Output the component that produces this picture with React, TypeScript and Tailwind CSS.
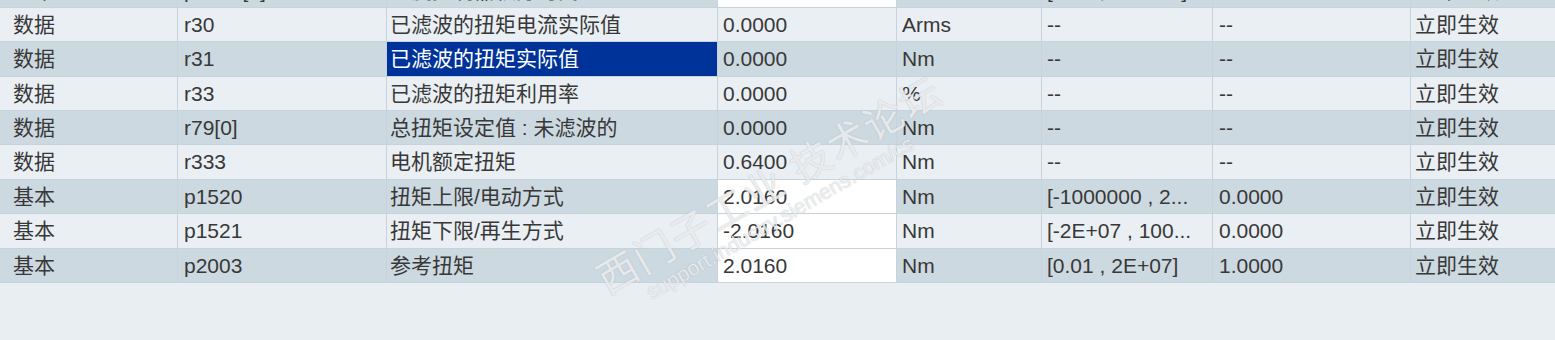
import React from 'react';

type Row = {
  group: string;
  no: string;
  name: string;
  value: string;
  unit: string;
  range: string;
  def: string;
  effect: string;
  editable?: boolean;
  selected?: boolean;
};

const rows: Row[] = [
  { group: '基本', no: 'p1400[0]', name: '速度控制器积分时间', value: '', unit: '', range: '[0.00 , 100000]', def: '', effect: '立即生效', editable: true },
  { group: '数据', no: 'r30', name: '已滤波的扭矩电流实际值', value: '0.0000', unit: 'Arms', range: '--', def: '--', effect: '立即生效' },
  { group: '数据', no: 'r31', name: '已滤波的扭矩实际值', value: '0.0000', unit: 'Nm', range: '--', def: '--', effect: '立即生效', selected: true },
  { group: '数据', no: 'r33', name: '已滤波的扭矩利用率', value: '0.0000', unit: '%', range: '--', def: '--', effect: '立即生效' },
  { group: '数据', no: 'r79[0]', name: '总扭矩设定值 : 未滤波的', value: '0.0000', unit: 'Nm', range: '--', def: '--', effect: '立即生效' },
  { group: '数据', no: 'r333', name: '电机额定扭矩', value: '0.6400', unit: 'Nm', range: '--', def: '--', effect: '立即生效' },
  { group: '基本', no: 'p1520', name: '扭矩上限/电动方式', value: '2.0160', unit: 'Nm', range: '[-1000000 , 2...', def: '0.0000', effect: '立即生效', editable: true },
  { group: '基本', no: 'p1521', name: '扭矩下限/再生方式', value: '-2.0160', unit: 'Nm', range: '[-2E+07 , 100...', def: '0.0000', effect: '立即生效', editable: true },
  { group: '基本', no: 'p2003', name: '参考扭矩', value: '2.0160', unit: 'Nm', range: '[0.01 , 2E+07]', def: '1.0000', effect: '立即生效', editable: true },
];

function ParamRow({ row, dark, first }: { row: Row; dark: boolean; first?: boolean }) {
  const bg = dark ? 'bg-[#cdd9e1]' : 'bg-[#eaeff4]';
  return (
    <div
      className={`grid h-[33.375px] grid-cols-[177px_208px_330px_178px_144px_170px_197px_1fr] gap-x-px ${
        first ? 'mt-[-26.4px]' : ''
      }`}
    >
      <div className={`${bg} flex items-center pl-[13px]`}>{row.group}</div>
      <div className={`${bg} flex items-center pl-[6px]`}>{row.no}</div>
      <div
        className={`flex items-center pl-[3px] whitespace-nowrap overflow-hidden ${
          row.selected ? 'bg-[#003399] text-white' : bg
        }`}
      >
        {row.name}
      </div>
      <div className={`${row.editable ? 'bg-white' : bg} flex items-center pl-[5px]`}>{row.value}</div>
      <div className={`${bg} flex items-center pl-[5px]`}>{row.unit}</div>
      <div className={`${bg} flex items-center pl-[5px] whitespace-nowrap overflow-hidden`}>{row.range}</div>
      <div className={`${bg} flex items-center pl-[6px]`}>{row.def}</div>
      <div className={`${bg} flex items-center pl-[4px]`}>{row.effect}</div>
    </div>
  );
}

export default function App() {
  return (
    <div className="relative h-[340px] w-[1555px] overflow-hidden bg-[#e9eef2] text-[21px] text-[#383838] [font-family:'Liberation_Sans','Noto_Sans_CJK_SC',sans-serif]">
      <div className="flex flex-col gap-y-px bg-[#c6d3dc] pb-px">
        {rows.map((r, i) => (
          <ParamRow key={r.no} row={r} dark={i % 2 === 0} first={i === 0} />
        ))}
      </div>

      {/* 水印 */}
      <div className="pointer-events-none absolute left-[578px] top-[155px] w-[420px] -rotate-[30deg] select-none text-white/75 [text-shadow:0_0_1px_rgba(120,130,140,0.6)]">
        <div className="whitespace-nowrap text-[40px] leading-[44px] tracking-[2px]">西门子工业 技术论坛</div>
        <div className="whitespace-nowrap pl-[36px] text-[21px] leading-[22px]">support.industry.siemens.com/cs</div>
      </div>
    </div>
  );
}
